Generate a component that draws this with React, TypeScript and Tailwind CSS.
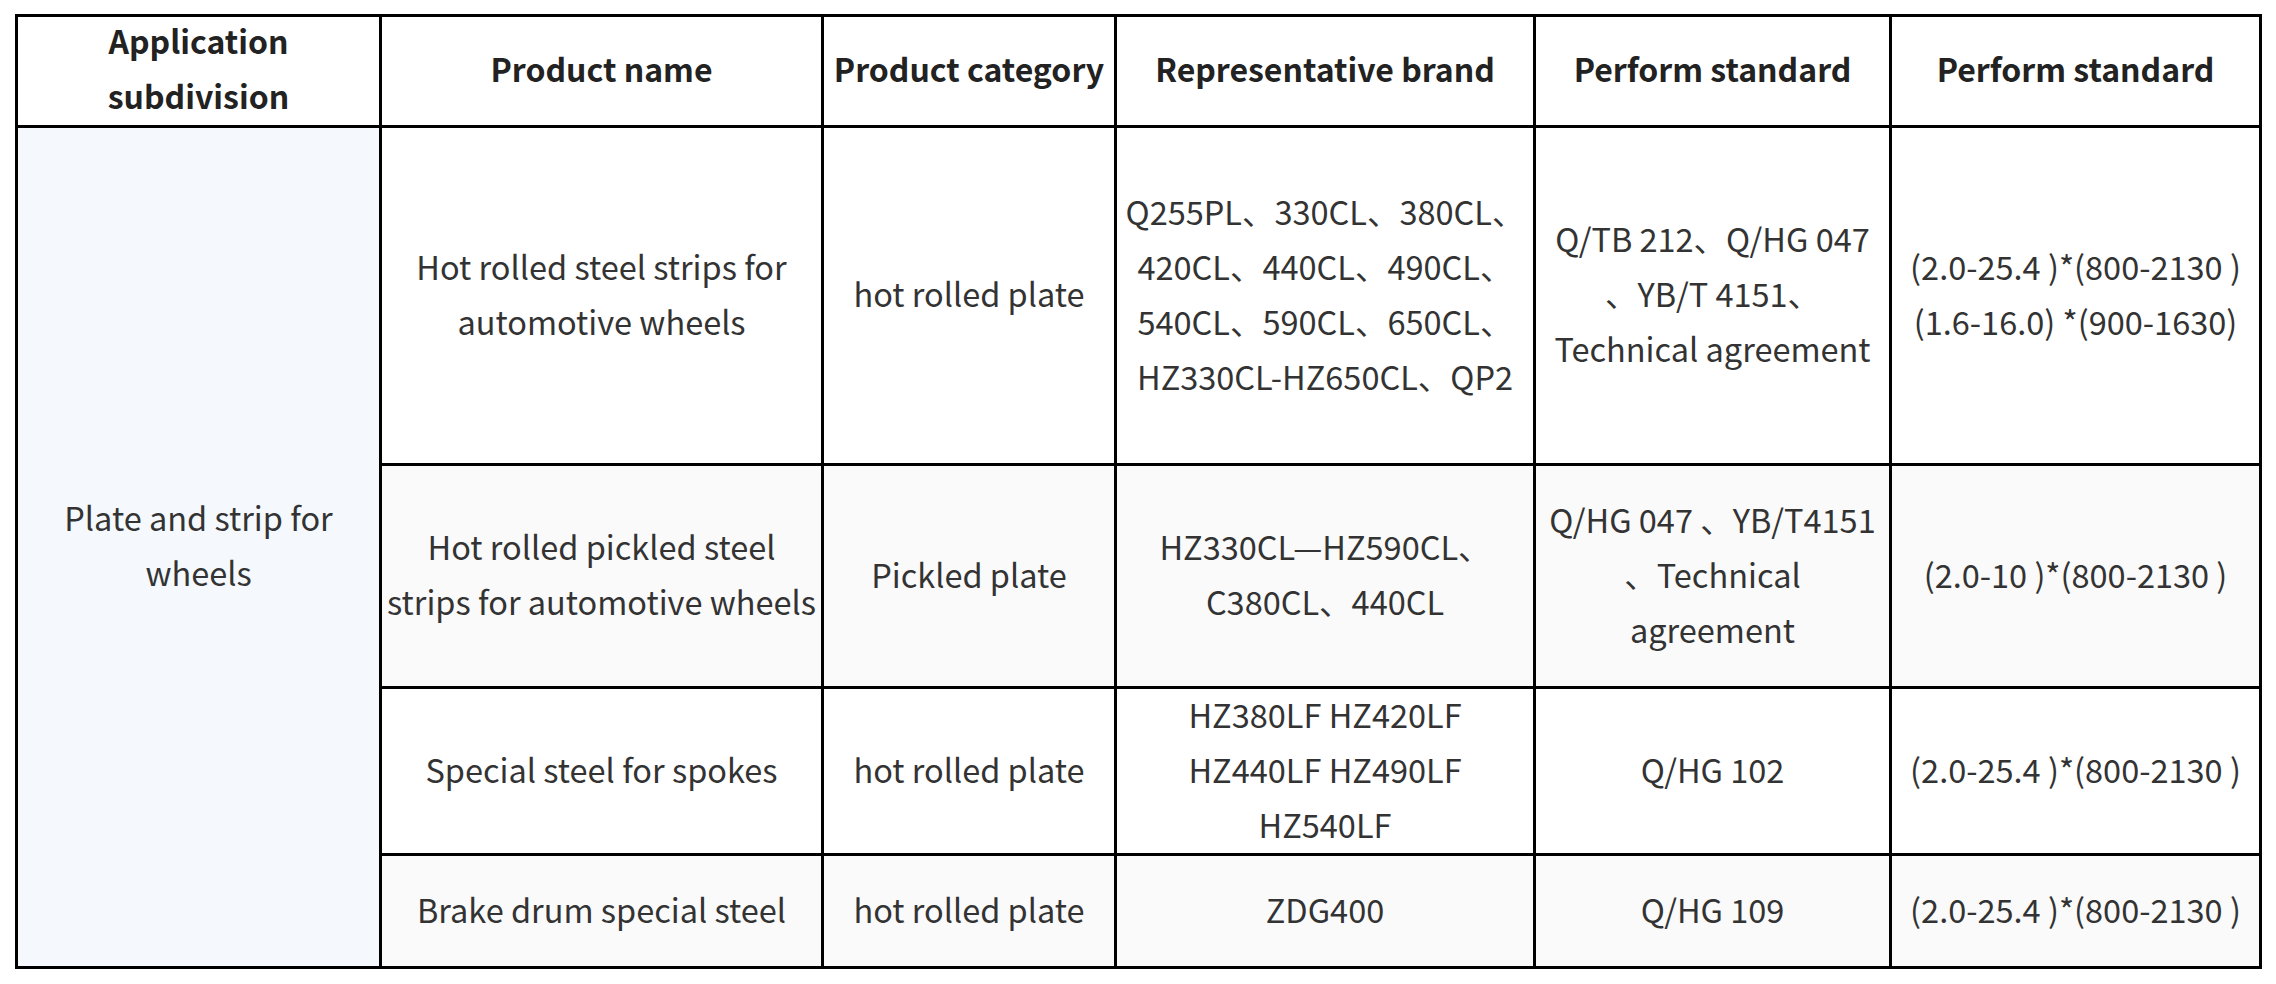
const headers = [
  ['Application', 'subdivision'],
  ['Product name'],
  ['Product category'],
  ['Representative brand'],
  ['Perform standard'],
  ['Perform standard'],
];

type Row = {
  height: string;
  bg: string;
  cells: string[][];
};

const rows: Row[] = [
  {
    height: 'h-[338px]',
    bg: 'bg-white',
    cells: [
      ['Hot rolled steel strips for', 'automotive wheels'],
      ['hot rolled plate'],
      ['Q255PL、330CL、380CL、', '420CL、440CL、490CL、', '540CL、590CL、650CL、', 'HZ330CL-HZ650CL、QP2'],
      ['Q/TB 212、Q/HG 047', '、YB/T 4151、', 'Technical agreement'],
      ['(2.0-25.4 )*(800-2130 )', '(1.6-16.0) *(900-1630)'],
    ],
  },
  {
    height: 'h-[223px]',
    bg: 'bg-[#fafafa]',
    cells: [
      ['Hot rolled pickled steel', 'strips for automotive wheels'],
      ['Pickled plate'],
      ['HZ330CL—HZ590CL、', 'C380CL、440CL'],
      ['Q/HG 047 、YB/T4151', '、Technical', 'agreement'],
      ['(2.0-10 )*(800-2130 )'],
    ],
  },
  {
    height: 'h-[167px]',
    bg: 'bg-white',
    cells: [
      ['Special steel for spokes'],
      ['hot rolled plate'],
      ['HZ380LF HZ420LF', 'HZ440LF HZ490LF', 'HZ540LF'],
      ['Q/HG 102'],
      ['(2.0-25.4 )*(800-2130 )'],
    ],
  },
  {
    height: 'h-[113px]',
    bg: 'bg-[#fafafa]',
    cells: [
      ['Brake drum special steel'],
      ['hot rolled plate'],
      ['ZDG400'],
      ['Q/HG 109'],
      ['(2.0-25.4 )*(800-2130 )'],
    ],
  },
];

// text sits a few px above the centre line in the original, so pull it up a bit
function Lines({ lines }: { lines: string[] }) {
  return (
    <div className="-mt-[6px]">
      {lines.map((line, i) => (
        <div key={i} className="whitespace-nowrap">
          {line}
        </div>
      ))}
    </div>
  );
}

export default function App() {
  return (
    <div
      className="min-h-screen bg-white pl-[15px] pt-[14px]"
      style={{ fontFamily: '"Noto Sans CJK SC", "Noto Sans", sans-serif' }}
    >
      <table className="table-fixed border-collapse border-[3px] border-black text-[32.5px] leading-[55px] text-[#333]">
        <colgroup>
          <col className="w-[364px]" />
          <col className="w-[442px]" />
          <col className="w-[293px]" />
          <col className="w-[419px]" />
          <col className="w-[356px]" />
          <col className="w-[370px]" />
        </colgroup>
        <thead>
          <tr className="h-[111px]">
            {headers.map((h, i) => (
              <th
                key={i}
                className="border-[3px] border-black bg-white p-0 text-center align-middle text-[32px] font-bold text-[#222]"
              >
                <Lines lines={h} />
              </th>
            ))}
          </tr>
        </thead>
        <tbody>
          {rows.map((row, r) => (
            <tr key={r} className={`${row.height} ${row.bg}`}>
              {r === 0 && (
                <td
                  rowSpan={4}
                  className="border-[3px] border-black bg-[#f5f9fd] p-0 text-center align-middle"
                >
                  <Lines lines={['Plate and strip for', 'wheels']} />
                </td>
              )}
              {row.cells.map((c, i) => (
                <td
                  key={i}
                  className="border-[3px] border-black p-0 text-center align-middle"
                >
                  <Lines lines={c} />
                </td>
              ))}
            </tr>
          ))}
        </tbody>
      </table>
    </div>
  );
}
